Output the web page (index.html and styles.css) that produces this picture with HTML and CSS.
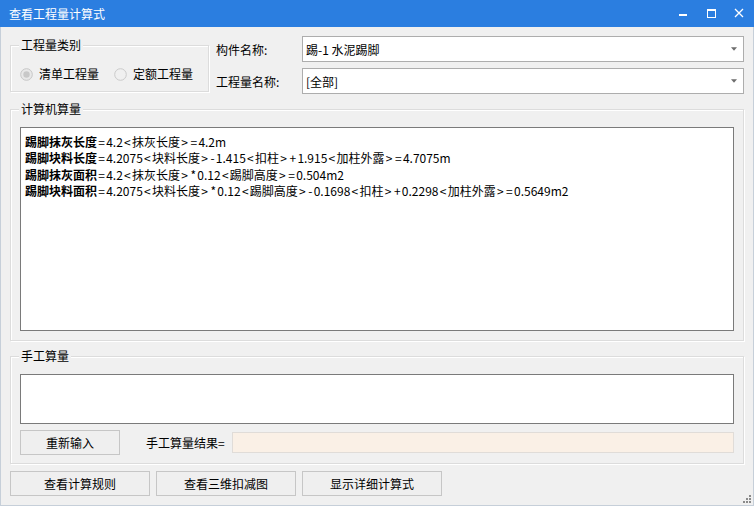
FILE: index.html
```html
<!DOCTYPE html>
<html lang="zh-CN">
<head>
<meta charset="utf-8">
<title>查看工程量计算式</title>
<link rel="stylesheet" href="styles.css">
</head>
<body>
<div class="window">
  <div class="titlebar">
    <span class="title">查看工程量计算式</span>
    <div class="controls">
      <svg class="ctl" width="28" height="27" viewBox="0 0 28 27"><rect x="10" y="14" width="8" height="2" fill="#fff"/></svg>
      <svg class="ctl" width="28" height="27" viewBox="0 0 28 27"><rect x="10.5" y="9.5" width="8" height="8" fill="none" stroke="#fff" stroke-width="1"/><rect x="10" y="9" width="9" height="2" fill="#fff"/></svg>
      <svg class="ctl" width="28" height="27" viewBox="0 0 28 27"><path d="M10 9 L18 17 M18 9 L10 17" stroke="#fff" stroke-width="1.3" fill="none"/></svg>
    </div>
  </div>
  <div class="content">
    <div class="top">
      <div class="group g-type">
        <span class="gtitle">工程量类别</span>
        <div class="radios">
          <span class="radio"><svg width="13" height="13" viewBox="0 0 13 13"><circle cx="6.5" cy="6.5" r="5.8" fill="#e8e8e8" stroke="#c6c6c6"/><circle cx="6.5" cy="6.5" r="3.2" fill="#c8c8c8"/></svg>清单工程量</span>
          <span class="radio"><svg width="13" height="13" viewBox="0 0 13 13"><circle cx="6.5" cy="6.5" r="5.8" fill="#f0f0f0" stroke="#cacaca"/></svg>定额工程量</span>
        </div>
      </div>
      <div class="fields">
        <div class="field">
          <span class="flabel">构件名称:</span>
          <div class="combo"><span>踢-1 水泥踢脚</span><svg width="7" height="4" viewBox="0 0 7 4"><path d="M0 0 H7 L3.5 4 Z" fill="#6d6d6d"/></svg></div>
        </div>
        <div class="field">
          <span class="flabel">工程量名称:</span>
          <div class="combo"><span>[全部]</span><svg width="7" height="4" viewBox="0 0 7 4"><path d="M0 0 H7 L3.5 4 Z" fill="#6d6d6d"/></svg></div>
        </div>
      </div>
    </div>

    <div class="group g-calc">
      <span class="gtitle">计算机算量</span>
      <div class="textbox calc">
        <div class="line"><b>踢脚抹灰长度</b><i>=</i>4.2<i>&lt;</i>抹灰长度<i>&gt;</i><i>=</i>4.2m</div>
        <div class="line"><b>踢脚块料长度</b><i>=</i>4.2075<i>&lt;</i>块料长度<i>&gt;</i><i>-</i>1.415<i>&lt;</i>扣柱<i>&gt;</i><i>+</i>1.915<i>&lt;</i>加柱外露<i>&gt;</i><i>=</i>4.7075m</div>
        <div class="line"><b>踢脚抹灰面积</b><i>=</i>4.2<i>&lt;</i>抹灰长度<i>&gt;</i><i>*</i>0.12<i>&lt;</i>踢脚高度<i>&gt;</i><i>=</i>0.504m2</div>
        <div class="line"><b>踢脚块料面积</b><i>=</i>4.2075<i>&lt;</i>块料长度<i>&gt;</i><i>*</i>0.12<i>&lt;</i>踢脚高度<i>&gt;</i><i>-</i>0.1698<i>&lt;</i>扣柱<i>&gt;</i><i>+</i>0.2298<i>&lt;</i>加柱外露<i>&gt;</i><i>=</i>0.5649m2</div>
      </div>
    </div>

    <div class="group g-manual">
      <span class="gtitle">手工算量</span>
      <div class="textbox manual"></div>
      <div class="manual-row">
        <button class="btn btn-reset">重新输入</button>
        <span class="rlabel">手工算量结果=</span>
        <div class="result"></div>
      </div>
    </div>

    <div class="buttons">
      <button class="btn btn-wide">查看计算规则</button>
      <button class="btn btn-wide">查看三维扣减图</button>
      <button class="btn btn-wide">显示详细计算式</button>
    </div>
    <svg class="grip" width="8" height="8" viewBox="0 0 8 8"><rect x="6" y="0" width="2" height="2" fill="#8a8a8a"/><rect x="3" y="3" width="2" height="2" fill="#8a8a8a"/><rect x="6" y="3" width="2" height="2" fill="#8a8a8a"/><rect x="0" y="6" width="2" height="2" fill="#8a8a8a"/><rect x="3" y="6" width="2" height="2" fill="#8a8a8a"/><rect x="6" y="6" width="2" height="2" fill="#8a8a8a"/></svg>
  </div>
</div>
</body>
</html>
```

FILE: styles.css
```css
* { box-sizing: border-box; }
html, body { margin: 0; padding: 0; }
body {
  width: 754px;
  height: 506px;
  overflow: hidden;
  font-family: "Noto Sans CJK SC", "Noto Sans", "Liberation Sans", sans-serif;
  font-size: 12px;
  color: #000;
  background: #f0f0f0;
}
.window {
  width: 754px;
  height: 506px;
  display: flex;
  flex-direction: column;
}
.titlebar {
  height: 27px;
  background: #2b7ee0;
  display: flex;
  align-items: center;
  padding-left: 9px;
  flex: none;
}
.title {
  color: #fff;
  font-size: 12px;
  line-height: 27px;
}
.controls {
  margin-left: auto;
  display: flex;
  height: 27px;
  margin-right: 1px;
}
.ctl { display: block; }
.content {
  flex: 1;
  position: relative;
  border: 1px solid #c6cfd9;
  border-top: none;
  padding: 0 9px;
  display: flex;
  flex-direction: column;
}
.top {
  margin-top: 9px;
  display: flex;
  height: 58px;
}
.group {
  position: relative;
  border: 1px solid #dcdcdc;
  box-shadow: inset 1px 1px 0 #fff, 1px 1px 0 #fff;
}
.gtitle {
  position: absolute;
  top: -9px;
  left: 8px;
  padding: 0 2px;
  background: #f0f0f0;
  line-height: 16px;
  font-size: 12px;
}
.g-type {
  margin-top: 9px;
  width: 199px;
  height: 47px;
  flex: none;
}
.radios {
  display: flex;
  padding: 20px 0 0 9px;
  gap: 15px;
}
.radio {
  display: flex;
  align-items: center;
  gap: 6px;
  line-height: 16px;
}
.radio svg { display: block; }
.fields {
  margin-left: 7px;
  flex: 1;
  display: flex;
  flex-direction: column;
  gap: 6px;
}
.field {
  display: flex;
  align-items: center;
  height: 26px;
}
.flabel {
  width: 86px;
  flex: none;
  padding-top: 1px;
}
.combo {
  flex: 1;
  height: 26px;
  background: #fff;
  border: 1px solid #adadad;
  display: flex;
  align-items: center;
  padding: 0 6px 0 3px;
}
.combo span { flex: 1; }
.combo svg { display: block; width: 6px; height: 4px; }

.g-calc {
  margin-top: 15px;
  height: 232px;
  padding: 17px 9px 9px 9px;
}
.textbox {
  background: #fff;
  border: 1px solid #7a7a7a;
}
.calc {
  height: 204px;
  padding: 6px 4px;
}
.line {
  line-height: 16.4px;
  white-space: nowrap;
}
.line b { font-weight: 700; }
.line i {
  font-style: normal;
  padding: 0 1.25px;
}

.g-manual {
  margin-top: 15px;
  height: 108px;
  padding: 17px 9px 8px 9px;
}
.manual {
  height: 50px;
}
.manual-row {
  margin-top: 6px;
  display: flex;
  align-items: center;
  height: 25px;
}
.btn {
  font-family: inherit;
  font-size: 12px;
  color: #000;
  background: #efefef;
  border: 1px solid #c6c6c6;
  height: 25px;
  padding: 0;
  margin: 0;
  border-radius: 0;
}
.btn-reset { width: 100px; }
.rlabel {
  margin-left: 26px;
  width: 86px;
  flex: none;
}
.result {
  flex: 1;
  height: 21px;
  background: #faf0e6;
  border: 1px solid #e0dcd8;
}
.buttons {
  margin-top: 7px;
  display: flex;
  gap: 6px;
}
.btn-wide { width: 140px; }
.grip {
  position: absolute;
  right: 2px;
  bottom: 2px;
}
```
